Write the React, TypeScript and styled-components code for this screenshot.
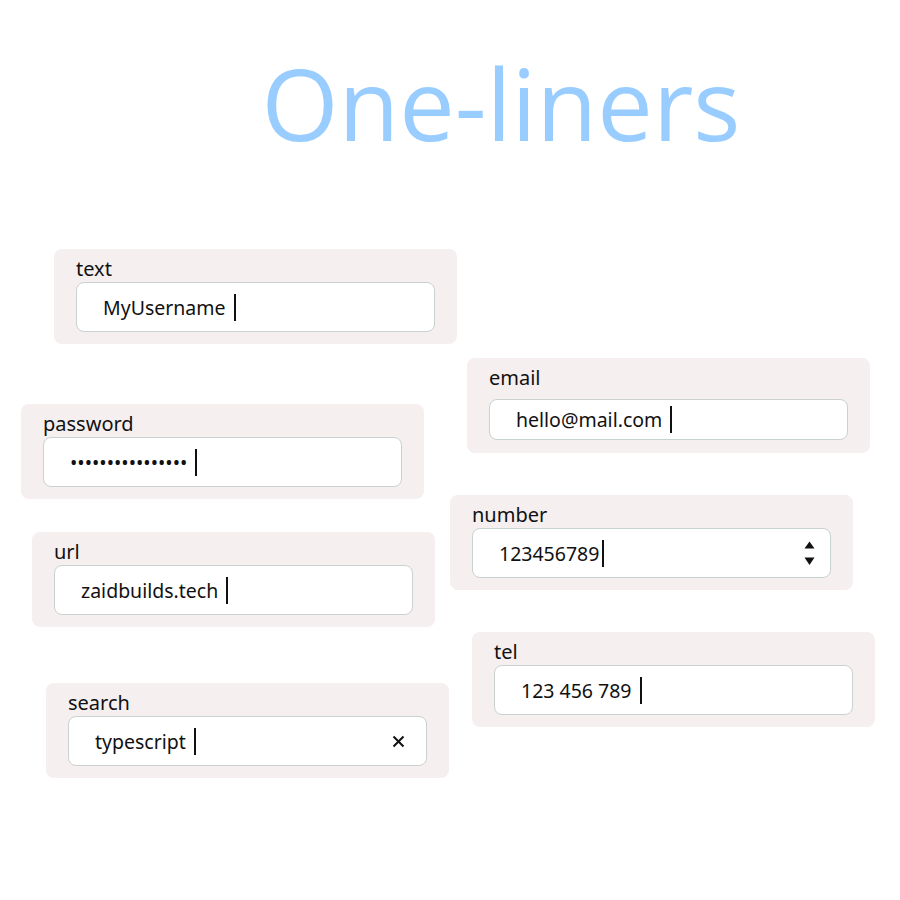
import React from 'react';
import styled, { createGlobalStyle } from 'styled-components';

const GlobalStyle = createGlobalStyle`
  body {
    margin: 0;
    background: #ffffff;
    font-family: "Noto Sans", "Open Sans", sans-serif;
    color: #111111;
  }
`;

const Page = styled.div`
  width: 900px;
  height: 900px;
  overflow: hidden;
`;

const Title = styled.h1`
  margin: 0;
  padding: 55px 0 0 102px;
  text-align: center;
  font-family: "Open Sans", sans-serif;
  font-size: 99px;
  line-height: 96px;
  font-weight: 400;
  color: #99cdff;
`;

const Columns = styled.div`
  display: grid;
  grid-template-columns: 450px 1fr;
  align-items: start;
`;

const Column = styled.div`
  display: flex;
  flex-direction: column;
  align-items: flex-start;
`;

const Card = styled.section<{ $x: number; $top: number }>`
  margin: ${(p) => p.$top}px 0 0 ${(p) => p.$x}px;
  width: 403px;
  height: 95px;
  box-sizing: border-box;
  padding: 8px 22px 0;
  background: #f5eff0;
  border-radius: 8px;
  display: flex;
  flex-direction: column;
`;

const Label = styled.div`
  font-size: 20px;
  line-height: 24px;
`;

const Box = styled.div<{ $h: number; $gap: number }>`
  margin-top: ${(p) => p.$gap}px;
  height: ${(p) => p.$h}px;
  box-sizing: border-box;
  border: 1px solid #c9d2d1;
  border-radius: 8px;
  background: #ffffff;
  display: flex;
  align-items: center;
  padding: 0 0 0 26px;
  font-size: 19.5px;
`;

const Value = styled.span`
  white-space: pre;
`;

const Caret = styled.span<{ $gap: number }>`
  width: 2px;
  height: 27px;
  margin-left: ${(p) => p.$gap}px;
  background: #111111;
`;

const Trailing = styled.span<{ $inset: number }>`
  margin-left: auto;
  margin-right: ${(p) => p.$inset}px;
  display: flex;
  align-items: center;
`;

const Spinner = () => (
  <svg width="11" height="25" viewBox="0 0 11 25">
    <path d="M5.5 0.5 L10.5 7.5 H0.5 Z" fill="#111" />
    <path d="M0.5 16.5 H10.5 L5.5 24 Z" fill="#111" />
  </svg>
);

const Clear = () => (
  <svg width="13" height="13" viewBox="0 0 13 13">
    <path d="M1.5 1.5 L11.5 11.5 M11.5 1.5 L1.5 11.5" stroke="#111" strokeWidth="2" fill="none" />
  </svg>
);

type Field = {
  label: string;
  value: string;
  x: number;
  top: number;
  caretGap?: number;
  compact?: boolean;
  trailing?: React.ReactNode;
  inset?: number;
};

const left: Field[] = [
  { label: 'text', value: 'MyUsername', x: 54, top: 98 },
  { label: 'password', value: '•'.repeat(16), x: 21, top: 60 },
  { label: 'url', value: 'zaidbuilds.tech', x: 32, top: 33 },
  { label: 'search', value: 'typescript', x: 46, top: 56, trailing: <Clear />, inset: 21 },
];

const right: Field[] = [
  { label: 'email', value: 'hello@mail.com', x: 17, top: 207, compact: true },
  { label: 'number', value: '123456789', x: 0, top: 42, caretGap: 3, trailing: <Spinner />, inset: 15 },
  { label: 'tel', value: '123 456 789', x: 22, top: 42 },
];

const InputCard = ({ field }: { field: Field }) => (
  <Card $x={field.x} $top={field.top}>
    <Label>{field.label}</Label>
    <Box $h={field.compact ? 41 : 50} $gap={field.compact ? 9 : 1}>
      <Value>{field.value}</Value>
      <Caret $gap={field.caretGap ?? 8} />
      {field.trailing && <Trailing $inset={field.inset ?? 0}>{field.trailing}</Trailing>}
    </Box>
  </Card>
);

export default function App() {
  return (
    <Page>
      <GlobalStyle />
      <Title>One-liners</Title>
      <Columns>
        <Column>
          {left.map((f) => (
            <InputCard key={f.label} field={f} />
          ))}
        </Column>
        <Column>
          {right.map((f) => (
            <InputCard key={f.label} field={f} />
          ))}
        </Column>
      </Columns>
    </Page>
  );
}
